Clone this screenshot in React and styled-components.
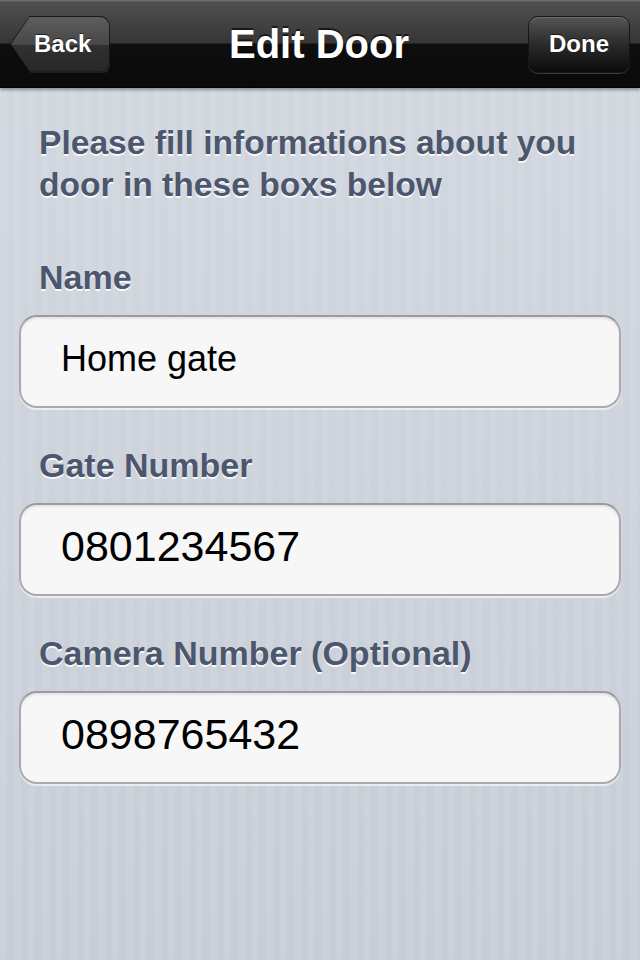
import React from 'react'
import styled, { createGlobalStyle } from "styled-components";

const GlobalStyle = createGlobalStyle`
  * { box-sizing: border-box; }
  body {
    margin: 0;
    font-family: "Liberation Sans", Arial, Helvetica, sans-serif;
  }
`;

const fields = [
  { label: "Name", value: "Home gate", big: false },
  { label: "Gate Number", value: "0801234567", big: true },
  { label: "Camera Number (Optional)", value: "0898765432", big: true },
];

const App = () => {
  return (
    <Page>
      <GlobalStyle />
      <NavBar>
        <BackOuter>
          <BackInner>Back</BackInner>
        </BackOuter>
        <Title>Edit Door</Title>
        <DoneButton>Done</DoneButton>
      </NavBar>
      <Content>
        <Intro>Please fill informations about you door in these boxs below</Intro>
        {fields.map((f) => (
          <Field key={f.label}>
            <Label>{f.label}</Label>
            <Input big={f.big ? 1 : 0}>{f.value}</Input>
          </Field>
        ))}
      </Content>
    </Page>
  );
}

const Page = styled.div`
  width: 640px;
  height: 960px;
  overflow: hidden;
  background:
    linear-gradient(rgba(220, 225, 232, 0.5), rgba(196, 202, 212, 0.4)),
    repeating-linear-gradient(90deg, #d0d5dd 0 7px, #c9cfd8 7px 14px);
`;

const NavBar = styled.div`
  position: relative;
  height: 88px;
  display: flex;
  align-items: center;
  justify-content: space-between;
  padding: 0 10px;
  background: linear-gradient(#777 0, #4f4f4f 2px, #363636 43px, #0e0e0e 44px, #0a0a0a 86px, #000 88px);
  box-shadow: 0 2px 3px rgba(0, 0, 0, 0.35);
`;

const Title = styled.h1`
  position: absolute;
  left: -2px;
  right: 0;
  margin: 0;
  text-align: center;
  color: #fff;
  font-size: 40px;
  font-weight: bold;
  text-shadow: 0 -2px 0 rgba(0, 0, 0, 0.6);
  pointer-events: none;
`;

const BackOuter = styled.div`
  height: 57px;
  width: 100px;
  padding: 1px;
  background: #161616;
  border-radius: 0 10px 10px 0;
  clip-path: polygon(20px 0, 100% 0, 100% 100%, 20px 100%, 0 50%);
  box-shadow: 0 1px 0 rgba(255, 255, 255, 0.2);
`;

const BackInner = styled.div`
  height: 100%;
  display: flex;
  align-items: center;
  padding-left: 23px;
  color: #fff;
  font-size: 24px;
  font-weight: bold;
  text-shadow: 0 -1px 0 rgba(0, 0, 0, 0.6);
  border-radius: 0 9px 9px 0;
  background: linear-gradient(#5e5e5e, #474747 50%, #313131 50%, #272727);
  clip-path: polygon(19px 0, 100% 0, 100% 100%, 19px 100%, 0 50%);
`;

const DoneButton = styled.div`
  height: 57px;
  width: 102px;
  display: flex;
  align-items: center;
  justify-content: center;
  color: #fff;
  font-size: 24px;
  font-weight: bold;
  text-shadow: 0 -1px 0 rgba(0, 0, 0, 0.6);
  border: 1px solid #161616;
  border-radius: 10px;
  background: linear-gradient(#555, #2a2a2a 50%, #0b0b0b 100%);
  box-shadow: 0 1px 0 rgba(255, 255, 255, 0.2), inset 0 1px 0 rgba(255, 255, 255, 0.15);
`;

const Content = styled.div`
  padding: 34px 19px 0;
`;

const Intro = styled.p`
  margin: 0 0 51px;
  padding: 0 20px;
  font-size: 33.6px;
  line-height: 42px;
  font-weight: bold;
  color: #4c566c;
  text-shadow: 0 2px 0 rgba(255, 255, 255, 0.85);
`;

const Field = styled.div`
  margin-bottom: 37px;
`;

const Label = styled.div`
  padding: 0 20px;
  height: 40px;
  line-height: 40px;
  font-size: 34px;
  font-weight: bold;
  color: #4c566c;
  text-shadow: 0 2px 0 rgba(255, 255, 255, 0.85);
  margin-bottom: 18px;
`;

const Input = styled.div`
  height: 93px;
  display: flex;
  align-items: center;
  padding: 0 0 6px 40px;
  background: #f7f7f7;
  border: 2px solid #aaa;
  border-top-color: #9c9c9c;
  border-radius: 18px;
  box-shadow: 0 2px 0 rgba(255, 255, 255, 0.6), inset 0 2px 2px rgba(0, 0, 0, 0.08);
  color: #000;
  font-size: ${(p) => (p.big ? "43px" : "36px")};
`;

export default App
